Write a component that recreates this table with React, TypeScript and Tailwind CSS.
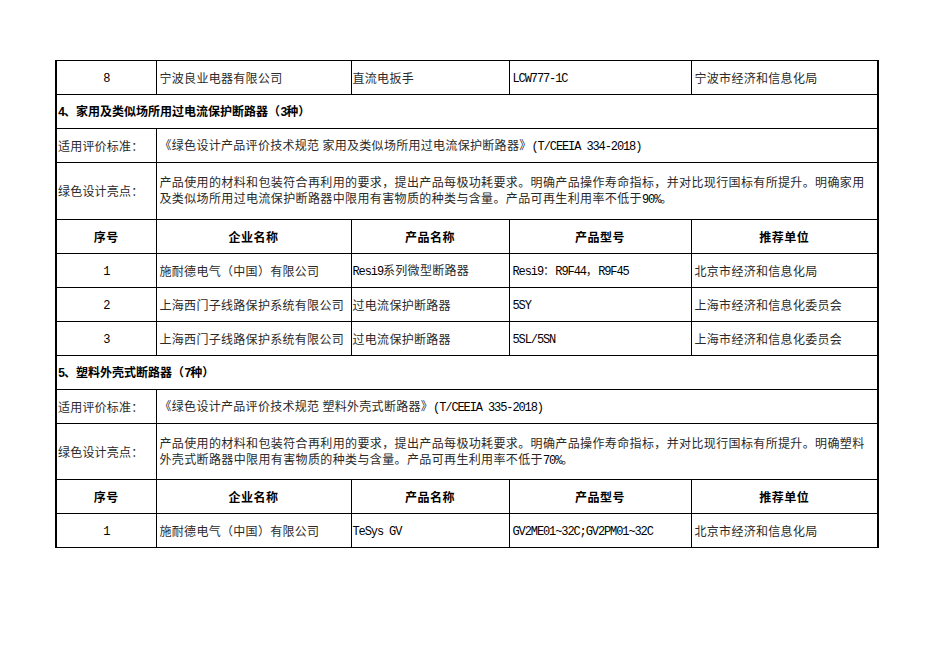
import React from "react";

const Txt = ({ s }: { s: string }) => {
  const parts = s.split(/([\x21-\x7e][\x20-\x7e]*[\x21-\x7e]|[\x21-\x7e])/);
  return (
    <>
      {parts.map((p, i) =>
        /^[\x20-\x7e]+$/.test(p) && p.trim() !== "" ? (
          <span key={i} className="font-['Liberation_Mono',monospace] text-[12px] tracking-[-1.1px] text-black">
            {p}
          </span>
        ) : (
          <React.Fragment key={i}>{p}</React.Fragment>
        )
      )}
    </>
  );
};

const td = "border border-black text-[#2a2a2a] align-middle";

const DataRow = ({ n, a, b, c, d }: { n: string; a: string; b: string; c: string; d: string }) => (
  <tr className="h-[34px]">
    <td className={`${td} text-center`}><Txt s={n} /></td>
    <td className={`${td} pl-[3px] whitespace-nowrap tracking-[0.3px]`}><Txt s={a} /></td>
    <td className={`${td} pl-[1px] whitespace-nowrap tracking-[0.3px]`}><Txt s={b} /></td>
    <td className={`${td} pl-[3px] whitespace-nowrap tracking-[0.3px]`}><Txt s={c} /></td>
    <td className={`${td} pl-[3px] whitespace-nowrap tracking-[0.3px]`}><Txt s={d} /></td>
  </tr>
);

const HeaderRow = () => (
  <tr className="h-[34px]">
    {["序号", "企业名称", "产品名称", "产品型号", "推荐单位"].map((h) => (
      <td key={h} className="border border-black text-center font-bold text-black align-middle tracking-[0.5px]">
        {h}
      </td>
    ))}
  </tr>
);

const Section = ({ title }: { title: string }) => (
  <tr className="h-[34px]">
    <td colSpan={5} className="border border-black pl-[1px] font-bold text-black align-middle">
      <Txt s={title} />
    </td>
  </tr>
);

const Standard = ({ s }: { s: string }) => (
  <tr className="h-[34px]">
    <td className={`${td} pl-[1px] tracking-[0.2px]`}>适用评价标准：</td>
    <td colSpan={4} className={`${td} pl-[3px] whitespace-nowrap tracking-[0.3px]`}>
      <Txt s={s} />
    </td>
  </tr>
);

const Highlight = ({ l1, l2, h }: { l1: string; l2: string; h: string }) => (
  <tr className={h}>
    <td className={`${td} pl-[1px] tracking-[0.2px]`}>绿色设计亮点：</td>
    <td colSpan={4} className={`${td} pl-[3px] whitespace-nowrap leading-[16px] tracking-[0.37px]`}>
      <Txt s={l1} />
      <br />
      <Txt s={l2} />
    </td>
  </tr>
);

export default function App() {
  return (
    <div className="min-h-screen bg-white pt-[60px] pl-[55px] font-['Noto_Sans_CJK_SC',sans-serif] text-[12px]">
      <table className="border-collapse table-fixed w-[822px] border-l-2 border-r-2 border-t border-b border-black">
        <colgroup>
          <col className="w-[100px]" />
          <col className="w-[195px]" />
          <col className="w-[158px]" />
          <col className="w-[182px]" />
          <col className="w-[187px]" />
        </colgroup>
        <tbody>
          <DataRow n="8" a="宁波良业电器有限公司" b="直流电扳手" c="LCW777-1C" d="宁波市经济和信息化局" />
          <Section title="4、家用及类似场所用过电流保护断路器（3种）" />
          <Standard s="《绿色设计产品评价技术规范 家用及类似场所用过电流保护断路器》(T/CEEIA 334-2018)" />
          <Highlight
            h="h-[57px]"
            l1="产品使用的材料和包装符合再利用的要求，提出产品每极功耗要求。明确产品操作寿命指标，并对比现行国标有所提升。明确家用"
            l2="及类似场所用过电流保护断路器中限用有害物质的种类与含量。产品可再生利用率不低于90%。"
          />
          <HeaderRow />
          <DataRow n="1" a="施耐德电气（中国）有限公司" b="Resi9系列微型断路器" c="Resi9：R9F44，R9F45" d="北京市经济和信息化局" />
          <DataRow n="2" a="上海西门子线路保护系统有限公司" b="过电流保护断路器" c="5SY" d="上海市经济和信息化委员会" />
          <DataRow n="3" a="上海西门子线路保护系统有限公司" b="过电流保护断路器" c="5SL/5SN" d="上海市经济和信息化委员会" />
          <Section title="5、塑料外壳式断路器（7种）" />
          <Standard s="《绿色设计产品评价技术规范 塑料外壳式断路器》(T/CEEIA 335-2018)" />
          <Highlight
            h="h-[56px]"
            l1="产品使用的材料和包装符合再利用的要求，提出产品每极功耗要求。明确产品操作寿命指标，并对比现行国标有所提升。明确塑料"
            l2="外壳式断路器中限用有害物质的种类与含量。产品可再生利用率不低于70%。"
          />
          <HeaderRow />
          <DataRow n="1" a="施耐德电气（中国）有限公司" b="TeSys GV" c="GV2ME01~32C;GV2PM01~32C" d="北京市经济和信息化局" />
        </tbody>
      </table>
    </div>
  );
}
